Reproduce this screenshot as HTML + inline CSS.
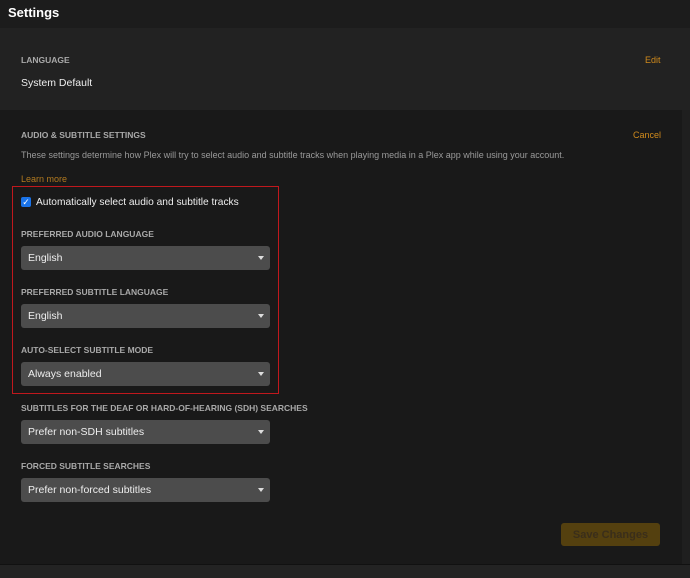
<!DOCTYPE html>
<html><head><style>
body{margin:0;width:690px;height:577px;background:#1f1f1f;font-family:"Liberation Sans",sans-serif;position:relative;overflow:hidden;color:#eee}
.a{position:absolute}
.lab{position:absolute;left:21px;font-size:8.5px;font-weight:bold;color:#a9a9a9;letter-spacing:0px}
.sel{position:absolute;left:21px;width:249px;height:24px;background:#4c4c4c;border-radius:3px;font-size:10.5px;color:#eee;line-height:25px;box-sizing:border-box;padding-left:7px}
.sel:after{content:"";position:absolute;right:6px;top:10px;border-left:3.5px solid transparent;border-right:3.5px solid transparent;border-top:4px solid #ddd}
</style></head><body>
<div class="a" style="left:0;top:0;width:690px;height:28px;background:#1c1c1c"></div>
<div class="a" style="left:8px;top:5px;font-size:13px;font-weight:bold;color:#fff">Settings</div>
<div class="a" style="left:0;top:28px;width:690px;height:82px;background:#222"></div>
<div class="lab" style="top:55px">LANGUAGE</div>
<div class="a" style="left:645px;top:55px;font-size:9px;color:#d08a1c">Edit</div>
<div class="a" style="left:21px;top:77px;font-size:10.5px;color:#eee">System Default</div>
<div class="a" style="left:0;top:110px;width:682px;height:454px;background:#191919"></div>
<div class="a" style="left:0;top:564px;width:690px;height:13px;background:#232323;border-top:1px solid #111"></div>
<div class="lab" style="top:130px">AUDIO &amp; SUBTITLE SETTINGS</div>
<div class="a" style="left:633px;top:130px;font-size:9px;color:#d08a1c">Cancel</div>
<div class="a" style="left:21px;top:150px;font-size:9px;color:#9a9a9a">These settings determine how Plex will try to select audio and subtitle tracks when playing media in a Plex app while using your account.</div>
<div class="a" style="left:21px;top:174px;font-size:9px;color:#b27a20">Learn more</div>
<div class="a" style="left:12px;top:186px;width:265px;height:206px;border:1px solid #c0181d"></div>
<div class="a" style="left:21px;top:197px;width:10px;height:10px;background:#1a73e8;border-radius:2px;color:#fff;font-size:9px;line-height:10px;text-align:center">✓</div>
<div class="a" style="left:36px;top:197px;font-size:10.2px;color:#eee">Automatically select audio and subtitle tracks</div>
<div class="lab" style="top:229px">PREFERRED AUDIO LANGUAGE</div>
<div class="sel" style="top:246px">English</div>
<div class="lab" style="top:287px">PREFERRED SUBTITLE LANGUAGE</div>
<div class="sel" style="top:304px">English</div>
<div class="lab" style="top:345px">AUTO-SELECT SUBTITLE MODE</div>
<div class="sel" style="top:362px">Always enabled</div>
<div class="lab" style="top:403px">SUBTITLES FOR THE DEAF OR HARD-OF-HEARING (SDH) SEARCHES</div>
<div class="sel" style="top:420px">Prefer non-SDH subtitles</div>
<div class="lab" style="top:461px">FORCED SUBTITLE SEARCHES</div>
<div class="sel" style="top:478px">Prefer non-forced subtitles</div>
<div class="a" style="left:561px;top:523px;width:99px;height:23px;background:#54400f;border-radius:3px;color:#3a2e1a;font-size:11px;font-weight:bold;text-align:center;line-height:24px">Save Changes</div>
</body></html>
